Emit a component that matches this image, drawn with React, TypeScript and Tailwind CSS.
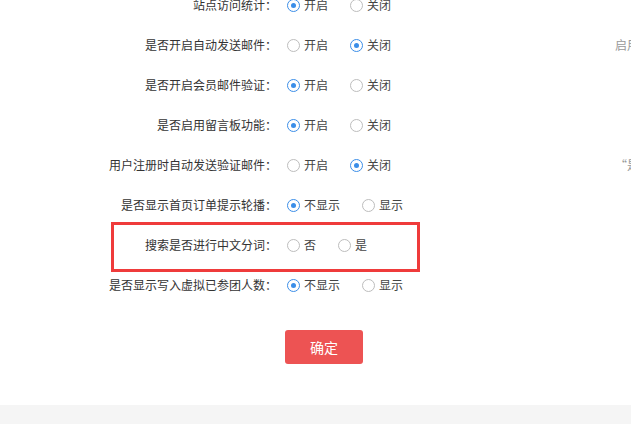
import { useState } from 'react';

interface Setting {
  label: string;
  options: string[];
  value: number;
  hint?: string;
}

const settings: Setting[] = [
  { label: '站点访问统计：', options: ['开启', '关闭'], value: 0 },
  { label: '是否开启自动发送邮件：', options: ['开启', '关闭'], value: 1, hint: '启用后，系统将自动发送邮件' },
  { label: '是否开启会员邮件验证：', options: ['开启', '关闭'], value: 0 },
  { label: '是否启用留言板功能：', options: ['开启', '关闭'], value: 0 },
  { label: '用户注册时自动发送验证邮件：', options: ['开启', '关闭'], value: 1, hint: '“是”时需要开启邮件服务' },
  { label: '是否显示首页订单提示轮播：', options: ['不显示', '显示'], value: 0 },
  { label: '搜索是否进行中文分词：', options: ['否', '是'], value: -1 },
  { label: '是否显示写入虚拟已参团人数：', options: ['不显示', '显示'], value: 0 },
];

function Radio({ checked }: { checked: boolean }) {
  return (
    <span
      className={`flex h-[13px] w-[13px] shrink-0 items-center justify-center rounded-full border bg-white ${
        checked ? 'border-[#3b8ee8]' : 'border-[#bdbdbd]'
      }`}
    >
      {checked && <span className="h-[5px] w-[5px] rounded-full bg-[#3b8ee8]" />}
    </span>
  );
}

function SettingRow({ setting, onChange }: { setting: Setting; onChange: (v: number) => void }) {
  return (
    <div className="flex h-10 items-center whitespace-nowrap">
      <label className="w-[277px] shrink-0 text-right text-[#333]">{setting.label}</label>
      <div className="flex w-[338px] shrink-0 items-center pl-[10px]">
        {setting.options.map((opt, i) => (
          <button
            key={opt}
            type="button"
            onClick={() => onChange(i)}
            className="mr-[22px] flex items-center gap-[4px] text-[#444]"
          >
            <Radio checked={setting.value === i} />
            <span>{opt}</span>
          </button>
        ))}
      </div>
      {setting.hint && <span className="text-[#999]">{setting.hint}</span>}
    </div>
  );
}

export default function App() {
  const [values, setValues] = useState(settings.map((s) => s.value));

  return (
    <div
      className="relative h-[424px] w-[631px] overflow-hidden bg-white text-[12px]"
      style={{ fontFamily: '"Noto Sans CJK SC", "Noto Sans", sans-serif' }}
    >
      <div className="mt-[-15px]">
        {settings.map((s, idx) => (
          <SettingRow
            key={s.label}
            setting={{ ...s, value: values[idx] }}
            onChange={(v) => setValues((prev) => prev.map((p, j) => (j === idx ? v : p)))}
          />
        ))}
      </div>

      <div className="mt-[25px] pl-[285px]">
        <button
          type="button"
          className="h-[34px] w-[78px] rounded-[3px] bg-[#ed5353] text-[14px] text-white"
        >
          确定
        </button>
      </div>

      <div className="mt-[41px] h-[40px] bg-[#f5f5f5]" />

      {/* highlight annotation */}
      <div className="pointer-events-none absolute left-[111px] top-[222px] h-[50px] w-[309px] border-[3px] border-[#ef3b3b]" />
    </div>
  );
}
